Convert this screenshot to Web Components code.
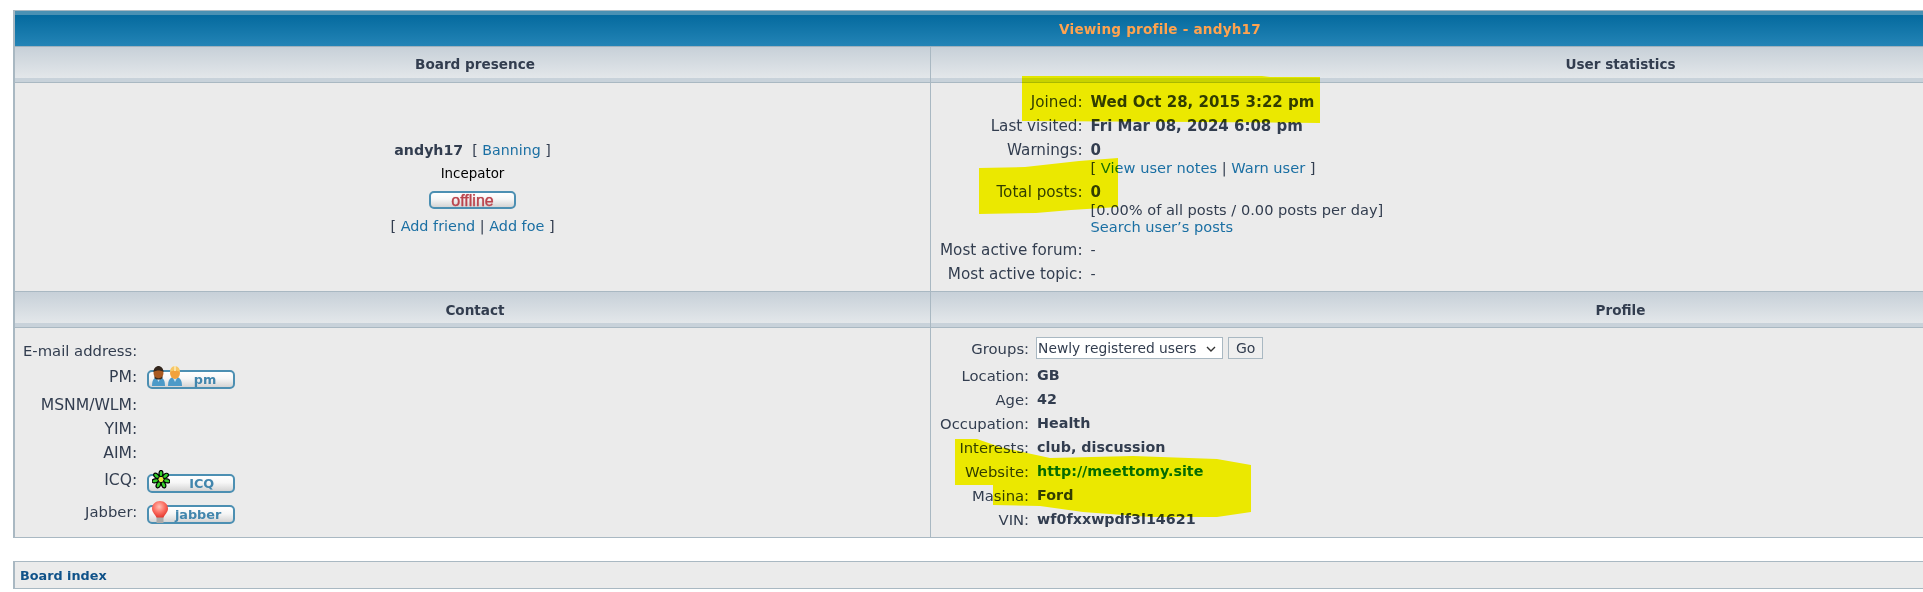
<!DOCTYPE html>
<html lang="en">
<head>
<meta charset="utf-8">
<title>Viewing profile - andyh17</title>
<style>
html,body{margin:0;padding:0;background:#fff;overflow:hidden;height:592px}
body{position:relative;padding:10px 0 0 13px;box-sizing:border-box;width:1923px;font:14.8px/17px "DejaVu Sans",Verdana,sans-serif;color:#323d4f}
</style>
</head>
<body>
<template id="t-panel"><style>
:host{display:block;width:2292px;border:solid #a9b8c2;border-width:1px 0 1px 2px;box-sizing:border-box}
.cap{height:36px;line-height:36px;text-align:center;font-weight:700;font-size:13.6px;color:#ffa34f;letter-spacing:.2px;border-bottom:1px solid #9fb2be;box-sizing:border-box;
background:linear-gradient(#4a91b4 0,#4a91b4 4px,#056a9e 4px,#2384b6 35px)}
.grid{display:grid;grid-template-columns:915px 1fr}
</style><div class="cap"><slot name="title"></slot></div><div class="grid"><slot></slot></div></template>

<template id="t-head"><style>
:host{display:block;height:36px;box-sizing:border-box;line-height:var(--lh,34px);padding-left:5px;text-align:center;font-weight:700;font-size:13.6px;color:#323d4f;border-bottom:1px solid #a9b8c2;
background:linear-gradient(#c7d0d8 0,#e3e7ea 31px,#c8d2da 31px,#c8d2da 100%)}
:host([divided]){border-left:1px solid #a9b8c2}
</style><slot></slot></template>

<template id="t-cell"><style>
:host{display:block;box-sizing:border-box;background:#ebebeb}
:host([divided]){border-left:1px solid #a9b8c2}
:host([ruled]){border-bottom:1px solid #a9b8c2}
</style><slot></slot></template>

<template id="t-rows"><style>
:host{display:grid;grid-template-columns:var(--label,auto) 1fr;column-gap:var(--cgap,8px);row-gap:7px;padding:var(--pad,10px 0 0 9px);box-sizing:border-box;justify-items:start;align-content:start;align-items:var(--ai,start);font-size:var(--lfs,14.8px)}
</style><slot></slot></template>

<template id="t-label"><style>
:host{display:block;justify-self:end;text-align:right;white-space:nowrap;padding-top:var(--top,0);height:var(--h,auto);box-sizing:border-box}
</style><slot></slot></template>

<template id="t-value"><style>
:host{display:block;white-space:nowrap;font-weight:700;font-size:var(--fs,14.3px);padding-top:var(--top,0);padding-bottom:var(--bot,0)}
:host([plain]){font-weight:400}
div.sub{font-weight:400;font-size:14.6px}
</style><slot></slot><div class="sub"><slot name="sub"></slot></div></template>

<template id="t-link"><style>
:host{display:inline;color:#1a6fa3}
:host([strong]){color:#105289;font-weight:700}
a{color:inherit;text-decoration:none}
</style><a href="#"><slot></slot></a></template>

<template id="t-imgbtn"><style>
:host{display:flex;position:relative;align-items:center;justify-content:flex-end;width:88px;height:19px;box-sizing:border-box;margin-top:var(--top,0);margin-left:var(--ml,0);padding-right:var(--pr,20px);
border:2px solid #4c8fb2;border-radius:5px;background:linear-gradient(#fff 0,#f6f6f6 45%,#d4d4d4 100%);
font:700 12.8px/15px "DejaVu Sans",sans-serif;color:#4286ad}
:host([tone="off"]){font:400 16px/15px "Liberation Sans",sans-serif;color:#b9454e;justify-content:center;padding:0;width:87px;height:18px;-webkit-text-stroke:.25px #b9454e;text-shadow:0 0 1px #d08086}
.ic{position:absolute;left:var(--il,2px);top:var(--it,-6px);display:block}
</style><span class="ic"><slot name="icon"></slot></span><span><slot></slot></span></template>

<template id="t-presence"><style>
:host{display:flex;flex-direction:column;align-items:center;padding-top:59px;height:208px;box-sizing:border-box}
.n{line-height:17px;white-space:nowrap;font-size:14.2px}
.r{font-size:13.4px;line-height:16px;color:#000;margin-top:7px}
.s{margin-top:9px}
.a{margin-top:9px;white-space:nowrap;font-size:14.4px}
</style><div class="n"><slot name="name"></slot></div><div class="r"><slot name="rank"></slot></div><div class="s"><slot name="status"></slot></div><div class="a"><slot name="actions"></slot></div></template>

<template id="t-footer"><style>
:host{display:block;width:2292px;margin-top:23px;height:28px;box-sizing:border-box;border:solid #a9b8c2;border-width:1px 0 1px 2px;background:#ebebeb;padding:5px 0 0 5px;font-size:12.8px;line-height:17px}
</style><slot></slot></template>

<template id="t-group"><style>
:host{display:flex;gap:5px;align-items:flex-start;margin-left:-1px}
select{appearance:none;-webkit-appearance:none;width:187px;height:22px;box-sizing:border-box;border:1px solid #a9b8c2;border-radius:0;color:#323d4f;font:13.8px "DejaVu Sans",sans-serif;padding:0 0 0 1px;margin:0;
background:#fff url("data:image/svg+xml,%3Csvg xmlns='http://www.w3.org/2000/svg' width='10' height='6'%3E%3Cpath d='M1 1l4 4 4-4' fill='none' stroke='%23333' stroke-width='1.4'/%3E%3C/svg%3E") no-repeat 169px 8px}
button{width:35px;height:22px;box-sizing:border-box;border:1px solid #a9b8c2;border-radius:0;background:#efefef;color:#323d4f;font:14px "DejaVu Sans",sans-serif;padding:0;margin:0}
</style><select><option>Newly registered users</option></select><button>Go</button></template>

<template id="t-marker"><style>
:host{position:absolute;left:0;top:0;width:1923px;height:592px;pointer-events:none;mix-blend-mode:darken;display:block}
svg{display:block}
</style><svg width="1923" height="592" viewBox="0 0 1923 592"><g fill="#eee800">
<polygon points="1022,76 1262,76 1270,77 1320,77 1320,123 1200,122 1022,121"/>
<polygon points="979,168 1025,167 1079,161 1118,158 1118,207 1071,210 1036,213 979,214"/>
<polygon points="955,439 977,439 1000,447 1027,453 1050,458 1133,456 1217,459 1251,465 1251,512 1217,517 1150,517 1083,512 1040,506 993,505 993,485 955,485"/>
</g></svg></template>

<pf-panel>
  <span slot="title">Viewing profile - andyh17</span>
  <pf-head>Board presence</pf-head>
  <pf-head divided>User statistics</pf-head>

  <pf-cell ruled>
    <pf-presence>
      <span slot="name"><b>andyh17</b>&nbsp;&nbsp;[ <pf-link>Banning</pf-link> ]</span>
      <span slot="rank">Incepator</span>
      <pf-imgbtn slot="status" tone="off">offline</pf-imgbtn>
      <span slot="actions">[ <pf-link>Add friend</pf-link> | <pf-link>Add foe</pf-link> ]</span>
    </pf-presence>
  </pf-cell>
  <pf-cell divided ruled>
    <pf-rows style="height:208px;--ai:baseline;--lfs:15.2px;--pad:10.5px 0 0 9px">
      <pf-label>Joined:</pf-label><pf-value style="--fs:15px">Wed Oct 28, 2015 3:22 pm</pf-value>
      <pf-label>Last visited:</pf-label><pf-value style="--fs:15px">Fri Mar 08, 2024 6:08 pm</pf-value>
      <pf-label>Warnings:</pf-label><pf-value style="--bot:1px;--fs:15px">0<span slot="sub">[ <pf-link>View user notes</pf-link> | <pf-link>Warn user</pf-link> ]</span></pf-value>
      <pf-label>Total posts:</pf-label><pf-value style="--fs:15px">0<span slot="sub">[0.00% of all posts / 0.00 posts per day]<br><pf-link>Search user’s posts</pf-link></span></pf-value>
      <pf-label>Most active forum:</pf-label><pf-value plain>-</pf-value>
      <pf-label>Most active topic:</pf-label><pf-value plain>-</pf-value>
    </pf-rows>
  </pf-cell>

  <pf-head style="--lh:36px">Contact</pf-head>
  <pf-head divided style="--lh:36px">Profile</pf-head>

  <pf-cell>
    <pf-rows style="--pad:14px 0 0 8px;--cgap:10px;--lfs:14.8px;height:209px">
      <pf-label>E-mail address:</pf-label><span></span>
      <pf-label style="--top:3px;--h:24px;font-size:15.6px">PM:</pf-label>
      <pf-imgbtn style="--top:4px;--pr:17px">pm<svg slot="icon" width="32" height="21" viewBox="0 0 32 21">
        <path d="M1 20c0-6 2-9 6.500-9s6.500 3 6.500 9z" fill="#4c9ac8"/><path d="M5 11l2.500 5 2.500-5z" fill="#cde4f2"/>
        <ellipse cx="7.500" cy="7" rx="5" ry="6" fill="#a85a22"/><path d="M2.500 6c0-4 3-6 5-6s5 2 5 6c-3-2-7-2-10 0z" fill="#33261c"/><path d="M3.500 10c2 3 6 3 8 0v2c-2 2-6 2-8 0z" fill="#3c2a1c"/>
        <path d="M17 20c0-6 2-9 7-9s7 3 7 9z" fill="#4c9ac8"/><path d="M21.500 11l2.500 5 2.500-5z" fill="#cde4f2"/>
        <ellipse cx="24" cy="7" rx="5" ry="6" fill="#f2a23c"/><path d="M19 6c0-4 3-6 5-6s5 2 5 6c-3-2-7-2-10 0z" fill="#f7c765"/><rect x="23" y="0" width="2" height="5" fill="#fbe3a6"/>
      </svg></pf-imgbtn>
      <pf-label style="font-size:15.6px">MSNM/WLM:</pf-label><span></span>
      <pf-label style="font-size:15.6px">YIM:</pf-label><span></span>
      <pf-label style="font-size:15.6px">AIM:</pf-label><span></span>
      <pf-label style="--top:3px;--h:24px;font-size:15.6px">ICQ:</pf-label>
      <pf-imgbtn style="--top:5px;--pr:19px;--it:-6px;--il:3px">ICQ<svg slot="icon" width="18" height="19" viewBox="0 0 18 19">
        <g fill="#35d02a" stroke="#000" stroke-width="1.2">
          <ellipse cx="9" cy="3.600" rx="2" ry="3.200"/><ellipse cx="9" cy="3.600" rx="2" ry="3.200" transform="rotate(51 9 9.500)"/><ellipse cx="9" cy="3.600" rx="2" ry="3.200" transform="rotate(103 9 9.500)"/><ellipse cx="9" cy="3.600" rx="2" ry="3.200" transform="rotate(154 9 9.500)"/><ellipse cx="9" cy="3.600" rx="2" ry="3.200" transform="rotate(206 9 9.500)"/><ellipse cx="9" cy="3.600" rx="2" ry="3.200" transform="rotate(257 9 9.500)"/><ellipse cx="9" cy="3.600" rx="2" ry="3.200" transform="rotate(309 9 9.500)"/>
        </g><circle cx="9" cy="9.500" r="2.400" fill="#e8e83a"/>
      </svg></pf-imgbtn>
      <pf-label style="--top:3px;--h:24px">Jabber:</pf-label>
      <pf-imgbtn style="--top:5px;--pr:12px;--it:-7px;--il:2px">jabber<svg slot="icon" width="18" height="24" viewBox="0 0 18 24">
        <defs><radialGradient id="bulb" cx=".45" cy=".35" r=".65"><stop offset="0" stop-color="#ffc2b8"/><stop offset=".55" stop-color="#fb6f63"/><stop offset="1" stop-color="#e5392f"/></radialGradient></defs>
        <rect x="5.500" y="15" width="7" height="8" fill="#aaa"/><path d="M9 1c4.500 0 8 3.300 8 7.500 0 4-3.500 6-4.500 9h-7c-1-3-4.500-5-4.500-9C1 4.300 4.500 1 9 1z" fill="url(#bulb)"/>
      </svg></pf-imgbtn>
    </pf-rows>
  </pf-cell>
  <pf-cell divided>
    <pf-rows style="--pad:9px 0 0 9px;height:209px">
      <pf-label style="--top:3px;--h:23px">Groups:</pf-label><pf-group style="height:23px"></pf-group>
      <pf-label>Location:</pf-label><pf-value>GB</pf-value>
      <pf-label>Age:</pf-label><pf-value>42</pf-value>
      <pf-label>Occupation:</pf-label><pf-value>Health</pf-value>
      <pf-label>Interests:</pf-label><pf-value>club, discussion</pf-value>
      <pf-label>Website:</pf-label><pf-value><pf-link strong style="color:#056b9c">http://meettomy.site</pf-link></pf-value>
      <pf-label>Masina:</pf-label><pf-value>Ford</pf-value>
      <pf-label>VIN:</pf-label><pf-value>wf0fxxwpdf3l14621</pf-value>
    </pf-rows>
  </pf-cell>
</pf-panel>
<pf-footer><pf-link strong>Board index</pf-link></pf-footer>
<pf-marker></pf-marker>
<script>
for (const [tag, id] of [['pf-panel','t-panel'],['pf-head','t-head'],['pf-cell','t-cell'],['pf-rows','t-rows'],['pf-label','t-label'],['pf-value','t-value'],['pf-link','t-link'],['pf-imgbtn','t-imgbtn'],['pf-presence','t-presence'],['pf-footer','t-footer'],['pf-group','t-group'],['pf-marker','t-marker']]) {
  customElements.define(tag, class extends HTMLElement {
    constructor(){ super(); this.attachShadow({mode:'open'}).appendChild(document.getElementById(id).content.cloneNode(true)); }
  });
}
</script>
</body>
</html>
